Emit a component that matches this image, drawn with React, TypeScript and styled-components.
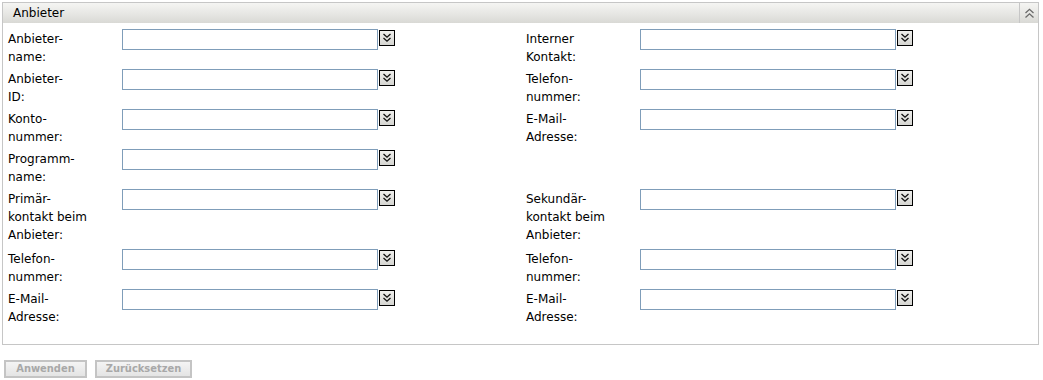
import React from 'react';
import styled, { createGlobalStyle } from 'styled-components';

interface Field {
	label: string[];
}

interface FormRow {
	lines: number;
	left: Field;
	right?: Field;
}

const rows: FormRow[] = [
	{ lines: 2, left: { label: ['Anbieter-', 'name:'] }, right: { label: ['Interner', 'Kontakt:'] } },
	{ lines: 2, left: { label: ['Anbieter-', 'ID:'] }, right: { label: ['Telefon-', 'nummer:'] } },
	{ lines: 2, left: { label: ['Konto-', 'nummer:'] }, right: { label: ['E-Mail-', 'Adresse:'] } },
	{ lines: 2, left: { label: ['Programm-', 'name:'] } },
	{
		lines: 3,
		left: { label: ['Primär-', 'kontakt beim', 'Anbieter:'] },
		right: { label: ['Sekundär-', 'kontakt beim', 'Anbieter:'] },
	},
	{ lines: 2, left: { label: ['Telefon-', 'nummer:'] }, right: { label: ['Telefon-', 'nummer:'] } },
	{ lines: 2, left: { label: ['E-Mail-', 'Adresse:'] }, right: { label: ['E-Mail-', 'Adresse:'] } },
];

const GlobalStyle = createGlobalStyle`
	body {
		margin: 0;
		background: #ffffff;
		font-family: "DejaVu Sans", Verdana, sans-serif;
		color: #000000;
	}
`;

const Page = styled.div`
	padding: 2px 5px 0 2px;
`;

const Panel = styled.section`
	width: 1035px;
	border: 1px solid #c6c6c6;
	padding-bottom: 17px;
`;

const PanelHeader = styled.div`
	display: flex;
	align-items: stretch;
	height: 20px;
	background: linear-gradient(to bottom, #f5f5f3 0%, #e6e6e3 55%, #d9d9d5 100%);
`;

const PanelTitle = styled.div`
	flex: 1;
	padding-left: 10px;
	font-size: 12px;
	line-height: 20px;
`;

const CollapseButton = styled.div`
	width: 18px;
	border-left: 1px solid #c6c6c6;
	display: flex;
	align-items: center;
	justify-content: center;
`;

const Form = styled.div`
	padding: 4px 0 0 5px;
`;

const Row = styled.div<{ $lines: number }>`
	display: grid;
	grid-template-columns: 518px 1fr;
	height: ${(p) => p.$lines * 20}px;
`;

const Cell = styled.div`
	display: flex;
	align-items: flex-start;
	padding-top: 2px;
`;

const Label = styled.div`
	width: 114px;
	font-size: 12px;
	line-height: 18px;
	padding-top: 1px;
`;

const TextInput = styled.input`
	box-sizing: border-box;
	width: 256px;
	height: 21px;
	margin: 0;
	border: 1px solid #7f9db9;
	background: #ffffff;
	font-family: inherit;
	font-size: 12px;
	padding: 0 3px;
	outline: none;
`;

const DropButton = styled.div`
	box-sizing: border-box;
	width: 16px;
	height: 16px;
	margin: 1px 0 0 1px;
	border: 1px solid #000000;
	background: linear-gradient(to bottom, #eeeeec, #d6d6d2);
	display: flex;
	align-items: center;
	justify-content: center;
`;

const Actions = styled.div`
	display: flex;
	gap: 8px;
	padding: 15px 0 0 2px;
`;

const ActionButton = styled.button<{ $width: number }>`
	box-sizing: border-box;
	width: ${(p) => p.$width}px;
	height: 18px;
	padding: 0;
	border: 2px solid #c4c4c4;
	background: linear-gradient(to bottom, #f4f4f4, #e4e4e4);
	color: #a8a8a8;
	font-family: "DejaVu Sans Condensed", "DejaVu Sans", sans-serif;
	font-size: 11px;
	font-weight: bold;
	line-height: 14px;
`;

const ChevronsDown = () => (
	<svg width="10" height="10" viewBox="0 0 10 10" fill="none" stroke="#111" strokeWidth="1.3">
		<polyline points="1.5,1 5,4.2 8.5,1" />
		<polyline points="1.5,5 5,8.2 8.5,5" />
	</svg>
);

const ChevronsUp = () => (
	<svg width="11" height="11" viewBox="0 0 11 11" fill="none" stroke="#6a6a6a" strokeWidth="1.3">
		<polyline points="1.5,5 5.5,1.3 9.5,5" />
		<polyline points="1.5,9.5 5.5,5.8 9.5,9.5" />
	</svg>
);

const FieldCell: React.FC<{ field?: Field }> = ({ field }) => {
	if (!field) return <Cell />;
	return (
		<Cell>
			<Label>
				{field.label.map((line, i) => (
					<div key={i}>{line}</div>
				))}
			</Label>
			<TextInput type="text" />
			<DropButton>
				<ChevronsDown />
			</DropButton>
		</Cell>
	);
};

const App: React.FC = () => {
	return (
		<Page>
			<GlobalStyle />
			<Panel>
				<PanelHeader>
					<PanelTitle>Anbieter</PanelTitle>
					<CollapseButton>
						<ChevronsUp />
					</CollapseButton>
				</PanelHeader>
				<Form>
					{rows.map((row, i) => (
						<Row key={i} $lines={row.lines}>
							<FieldCell field={row.left} />
							<FieldCell field={row.right} />
						</Row>
					))}
				</Form>
			</Panel>
			<Actions>
				<ActionButton $width={83} disabled>
					Anwenden
				</ActionButton>
				<ActionButton $width={97} disabled>
					Zurücksetzen
				</ActionButton>
			</Actions>
		</Page>
	);
};

export default App;
